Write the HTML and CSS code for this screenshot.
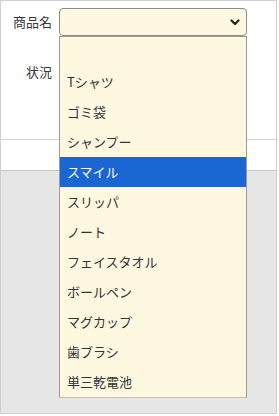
FILE: index.html
```
<!DOCTYPE html>
<html lang="ja">
<head>
    <meta charset="UTF-8">
    <meta name="viewport" content="width=device-width, initial-scale=1.0">
    <title>商品</title>
    <link rel="stylesheet" href="styles.css">
</head>
<body>
    <div class="frame">
        <div class="form">
            <div class="row">
                <div class="label">商品名</div>
                <div class="select-wrap">
                    <div class="select">
                        <svg class="chevron" width="10" height="7" viewBox="0 0 10 7">
                            <path d="M1.5 1.5L5 5L8.5 1.5" fill="none" stroke="#222" stroke-width="2.2" stroke-linecap="round" stroke-linejoin="round"/>
                        </svg>
                    </div>
                    <ul class="options">
                        <li></li>
                        <li>Tシャツ</li>
                        <li>ゴミ袋</li>
                        <li>シャンプー</li>
                        <li class="active">スマイル</li>
                        <li>スリッパ</li>
                        <li>ノート</li>
                        <li>フェイスタオル</li>
                        <li>ボールペン</li>
                        <li>マグカップ</li>
                        <li>歯ブラシ</li>
                        <li>単三乾電池</li>
                    </ul>
                </div>
            </div>
            <div class="row second">
                <div class="label">状況</div>
                <div class="field"></div>
            </div>
        </div>
        <div class="blank"></div>
        <div class="gray"></div>
    </div>
</body>
</html>
```

FILE: styles.css
```
*{
    margin: 0;
    padding: 0;
    list-style: none;
    box-sizing: border-box;
}
body{
    background-color: #fff;
    font-family: "Noto Sans CJK JP", "Noto Sans", sans-serif;
    font-size: 13px;
    color: #333;
}
.frame{
    display: flex;
    flex-direction: column;
    width: 277px;
    height: 414px;
    border: 1px solid #cfcfcf;
}
.form{
    height: 139px;
    padding-top: 7px;
    border-bottom: 1px solid #d2d2d2;
}
.row{
    display: grid;
    grid-template-columns: 51px 188px;
    column-gap: 7px;
    align-items: center;
    height: 28px;
}
.second{
    margin-top: 22px;
}
.label{
    text-align: right;
    line-height: 28px;
    color: #3a3a3a;
}
.select-wrap{
    position: relative;
    height: 28px;
}
.select{
    display: flex;
    justify-content: flex-end;
    align-items: center;
    height: 28px;
    padding-right: 6px;
    border: 1px solid #8a8a8a;
    border-radius: 4px;
    background-color: #fff8e1;
}
.options{
    position: absolute;
    top: 28px;
    left: 0;
    z-index: 2;
    width: 188px;
    border: 1px solid #9a9a9a;
    border-bottom-color: #c4c0b4;
    background-color: #fff8e1;
}
.options li{
    height: 30px;
    line-height: 30px;
    padding-left: 7px;
    color: #333;
}
.options li.active{
    background-color: #1a66d2;
    color: #fff;
}
.blank{
    height: 31px;
    border-bottom: 1px solid #c6c6c6;
}
.gray{
    flex: 1;
    background-color: #e6e6e6;
}
```
